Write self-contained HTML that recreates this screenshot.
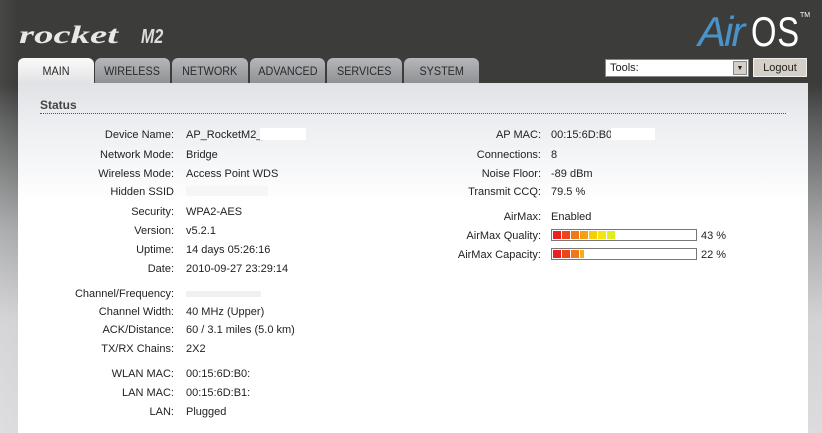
<!DOCTYPE html>
<html><head><meta charset="utf-8"><style>
*{margin:0;padding:0;box-sizing:border-box}
body{width:822px;height:433px;overflow:hidden;position:relative;font-family:"Liberation Sans",Arial,sans-serif;font-size:11px;color:#222;
background:linear-gradient(180deg,#3c3d3b 0,#3c3d3b 85px,#5a5b5b 120px,#a9aaab 230px,#d3d3d5 320px,#dcdbde 433px)}
#lside{position:absolute;left:0;top:0;width:18px;height:433px;background:linear-gradient(90deg,rgba(255,255,255,.06),rgba(255,255,255,0))}
.logo{position:absolute;left:19px;top:22px;color:#e8e8e8;font-style:italic;font-weight:bold;font-size:25px;letter-spacing:0px;font-family:"Liberation Serif",serif;transform:scaleX(1.55);transform-origin:left}
.m2{position:absolute;left:141px;top:26px;color:#ddd;font-style:italic;font-weight:bold;font-size:20px;transform:scaleX(.8);transform-origin:left}
.air{position:absolute;left:698px;top:8px;font-size:42px;color:#4a93c9;font-style:italic;letter-spacing:-2px}
.os{position:absolute;left:751px;top:8px;font-size:42px;color:#fff;transform:scaleX(.78);transform-origin:left;letter-spacing:1px}
.tm{position:absolute;left:800px;top:12px;color:#fff;font-size:7px}
.tab{position:absolute;top:58px;height:25px;border-radius:6px 6px 0 0;background:linear-gradient(#b5b7ba,#8f9195);color:#2a2a2a;font-size:12px;text-align:center;line-height:26px}
.tab span{display:inline-block;transform:scaleX(.9)}
.tab.act{background:linear-gradient(#fafafa,#e2e3e6);}
#panel{position:absolute;left:18px;top:83px;width:790px;height:350px;background:linear-gradient(#e0e2e5 0,#eceef1 40px,#fff 120px)}
.status{position:absolute;left:40px;top:98px;font-weight:bold;color:#444;font-size:12px}
.rule{position:absolute;left:40px;top:113px;width:746px;border-top:1px dotted #555}
.l{position:absolute;text-align:right;line-height:14px;color:#222;margin-top:1px}
.v{position:absolute;line-height:14px;margin-top:1px}
.w{position:absolute;background:#fff}
.tools{position:absolute;left:605px;top:59px;width:144px;height:18px;border:1px solid #888;background:#fff;font-size:11px;padding:2px 4px}
.arr{position:absolute;right:1px;top:1px;width:14px;height:14px;background:#d4d0c8;border:1px solid #888;font-size:7px;text-align:center;line-height:13px}
.logout{position:absolute;left:753px;top:58px;width:54px;height:19px;background:#d4d0c8;border:1px solid #eee;font-size:11px;text-align:center;line-height:18px;color:#222}
.bar{position:absolute;left:551px;width:146px;height:12px;border:1px solid #777;background:#fff}
.seg{position:absolute;top:1px;width:8px;height:8px}
</style></head><body>
<div id="lside"></div>
<div class="logo">rocket</div><div class="m2">M2</div>
<div class="air">Air</div><div class="os">OS</div><div class="tm">TM</div>
<div class="tools">Tools:<div class="arr">▼</div></div>
<div class="logout">Logout</div>
<div id="panel"></div>
<div class="tab act" style="left:18px;width:76px"><span>MAIN</span></div>
<div class="tab" style="left:95px;width:75px"><span>WIRELESS</span></div>
<div class="tab" style="left:172px;width:76px"><span>NETWORK</span></div>
<div class="tab" style="left:250px;width:75px"><span>ADVANCED</span></div>
<div class="tab" style="left:327px;width:75px"><span>SERVICES</span></div>
<div class="tab" style="left:404px;width:75px"><span>SYSTEM</span></div>
<div class="status">Status</div><div class="rule"></div>

<div class="l" style="right:648px;top:127px">Device Name:</div><div class="v" style="left:186px;top:127px">AP_RocketM2_</div><div class="w" style="left:260px;top:128px;width:46px;height:12px"></div>
<div class="l" style="right:648px;top:147px">Network Mode:</div><div class="v" style="left:186px;top:147px">Bridge</div>
<div class="l" style="right:648px;top:166px">Wireless Mode:</div><div class="v" style="left:186px;top:166px">Access Point WDS</div>
<div class="l" style="right:648px;top:184px">Hidden SSID</div><div class="w" style="left:186px;top:186px;width:82px;height:10px;background:#f6f6f6"></div>
<div class="l" style="right:648px;top:204px">Security:</div><div class="v" style="left:186px;top:204px">WPA2-AES</div>
<div class="l" style="right:648px;top:223px">Version:</div><div class="v" style="left:186px;top:223px">v5.2.1</div>
<div class="l" style="right:648px;top:242px">Uptime:</div><div class="v" style="left:186px;top:242px">14 days 05:26:16</div>
<div class="l" style="right:648px;top:261px">Date:</div><div class="v" style="left:186px;top:261px">2010-09-27 23:29:14</div>
<div class="l" style="right:648px;top:286px">Channel/Frequency:</div><div class="w" style="left:186px;top:291px;width:75px;height:6px;background:#f0f0f0"></div>
<div class="l" style="right:648px;top:304px">Channel Width:</div><div class="v" style="left:186px;top:304px">40 MHz (Upper)</div>
<div class="l" style="right:648px;top:322px">ACK/Distance:</div><div class="v" style="left:186px;top:322px">60 / 3.1 miles (5.0 km)</div>
<div class="l" style="right:648px;top:341px">TX/RX Chains:</div><div class="v" style="left:186px;top:341px">2X2</div>
<div class="l" style="right:648px;top:366px">WLAN MAC:</div><div class="v" style="left:186px;top:366px">00:15:6D:B0:</div>
<div class="l" style="right:648px;top:385px">LAN MAC:</div><div class="v" style="left:186px;top:385px">00:15:6D:B1:</div>
<div class="l" style="right:648px;top:404px">LAN:</div><div class="v" style="left:186px;top:404px">Plugged</div>

<div class="l" style="right:281px;top:127px">AP MAC:</div><div class="v" style="left:551px;top:127px">00:15:6D:B0</div><div class="w" style="left:611px;top:128px;width:44px;height:12px"></div>
<div class="l" style="right:281px;top:147px">Connections:</div><div class="v" style="left:551px;top:147px">8</div>
<div class="l" style="right:281px;top:166px">Noise Floor:</div><div class="v" style="left:551px;top:166px">-89 dBm</div>
<div class="l" style="right:281px;top:184px">Transmit CCQ:</div><div class="v" style="left:551px;top:184px">79.5 %</div>
<div class="l" style="right:281px;top:209px">AirMax:</div><div class="v" style="left:551px;top:209px">Enabled</div>
<div class="l" style="right:281px;top:228px">AirMax Quality:</div>
<div class="bar" style="top:229px">
<div class="seg" style="left:1px;background:#e82020"></div><div class="seg" style="left:10px;background:#ee4418"></div><div class="seg" style="left:19px;background:#f07818"></div><div class="seg" style="left:28px;background:#f5a010"></div><div class="seg" style="left:37px;background:#f8cc08"></div><div class="seg" style="left:46px;background:#f4e410"></div><div class="seg" style="left:55px;background:#e0ec20"></div>
</div><div class="v" style="left:701px;top:228px">43 %</div>
<div class="l" style="right:281px;top:247px">AirMax Capacity:</div>
<div class="bar" style="top:248px">
<div class="seg" style="left:1px;background:#e82020"></div><div class="seg" style="left:10px;background:#ee4418"></div><div class="seg" style="left:19px;background:#f07818"></div><div class="seg" style="left:28px;width:4px;background:#f5b010"></div>
</div><div class="v" style="left:701px;top:247px">22 %</div>
</body></html>
